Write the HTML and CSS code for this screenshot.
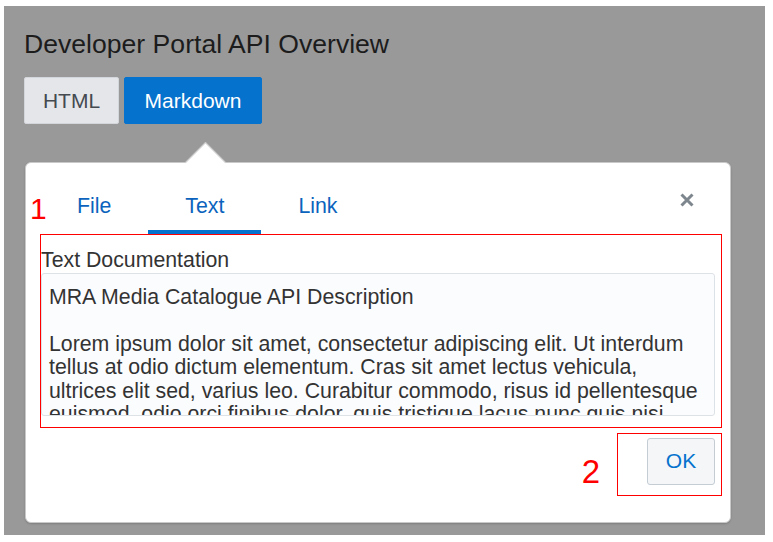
FILE: index.html
```html
<!DOCTYPE html>
<html lang="en">
<head>
<meta charset="utf-8">
<title>Developer Portal API Overview</title>
<link rel="stylesheet" href="styles.css">
</head>
<body>
<div class="screen">
  <h1 class="title">Developer Portal API Overview</h1>
  <div class="toggle">
    <button class="seg">HTML</button>
    <button class="seg seg-active">Markdown</button>
  </div>
  <div class="popover">
    <span class="marker marker-one">1</span>
    <div class="pop-head">
      <nav class="tabs">
        <a class="tab">File</a>
        <a class="tab tab-active">Text</a>
        <a class="tab">Link</a>
      </nav>
      <button class="close" aria-label="Close">
        <svg width="14" height="14" viewBox="0 0 14 14"><path d="M1.5 1.5 L12.5 12.5 M12.5 1.5 L1.5 12.5" stroke="#7d858d" stroke-width="3" stroke-linecap="butt" fill="none"/></svg>
      </button>
    </div>
    <div class="field outline">
      <label class="field-label">Text Documentation</label>
      <div class="textarea">
        <p>MRA Media Catalogue API Description</p>
        <p>Lorem ipsum dolor sit amet, consectetur adipiscing elit. Ut interdum tellus at odio dictum elementum. Cras sit amet lectus vehicula, ultrices elit sed, varius leo. Curabitur commodo, risus id pellentesque euismod, odio orci finibus dolor, quis tristique lacus nunc quis nisi.</p>
      </div>
    </div>
    <div class="actions">
      <span class="marker marker-two">2</span>
      <div class="outline ok-wrap">
        <button class="ok">OK</button>
      </div>
    </div>
  </div>
</div>
</body>
</html>
```

FILE: styles.css
```css
* { box-sizing: border-box; }
html, body { margin: 0; padding: 0; background: #fff; }
body { font-family: "Liberation Sans", Arial, sans-serif; }

.screen {
  margin: 6px 8px 7px 4px;
  width: 761px;
  height: 529px;
  background: #999999;
  padding: 23px 0 0 20px;
  overflow: hidden;
}

.title {
  margin: 0;
  font-size: 26.6px;
  line-height: 30px;
  font-weight: normal;
  color: #1c1c1c;
}

.toggle {
  display: flex;
  gap: 5px;
  margin-top: 18px;
}
.seg {
  height: 47px;
  padding: 0;
  font-family: inherit;
  font-size: 21px;
  line-height: 24px;
  border: 1px solid #d3d6da;
  border-radius: 2px;
  background: #e4e6e9;
  color: #444a50;
}
.seg:first-child { width: 95px; }
.seg-active {
  background: #0572ce;
  border-color: #0572ce;
  color: #fff;
  width: 138px;
}

.popover {
  position: relative;
  margin-top: 38px;
  margin-left: 1px;
  width: 706px;
  height: 361px;
  background: #fff;
  border: 1px solid #c9c9c9;
  border-radius: 6px;
  box-shadow: 0 1px 2px rgba(0,0,0,0.18);
  padding: 0 8px 0 14px;
}
.popover::before {
  content: "";
  position: absolute;
  width: 28px;
  height: 28px;
  left: 165px;
  top: -15px;
  background: #fff;
  border-top: 1px solid #c9c9c9;
  border-left: 1px solid #c9c9c9;
  transform: rotate(45deg);
}

.marker {
  color: #ff0000;
  font-family: "Liberation Sans", Arial, sans-serif;
}
.marker-one {
  position: absolute;
  left: 4px;
  top: 31px;
  font-size: 30px;
  line-height: 30px;
}

.pop-head {
  position: relative;
  display: flex;
  align-items: flex-start;
}
.tabs {
  display: flex;
  padding-top: 31px;
}
.tab {
  padding: 0 37px 12px;
  font-size: 21.3px;
  line-height: 24px;
  color: #0b63bd;
  border-bottom: 4px solid transparent;
}
.tab-active { border-bottom-color: #0572ce; }

.close {
  margin: 30px 28px 0 auto;
  padding: 0;
  border: 0;
  background: none;
  width: 14px;
  height: 14px;
  display: block;
}
.close svg { display: block; }

.outline { border: 1px solid #ff0000; }

.field {
  padding: 14px 6px 11px 0;
}
.field-label {
  display: block;
  font-size: 21.3px;
  line-height: 23.5px;
  color: #333;
}
.textarea {
  height: 143px;
  overflow: hidden;
  background: #fbfcfe;
  border: 1px solid #dde2e7;
  border-radius: 3px;
  padding: 12px 11px 0 7px;
  font-size: 21.3px;
  line-height: 23.5px;
  color: #333;
}
.textarea p { margin: 0 0 23.5px; }

.actions {
  display: flex;
  justify-content: flex-end;
  align-items: flex-end;
  margin-top: 5px;
}
.marker-two {
  font-size: 33px;
  line-height: 33px;
  margin: 0 17px 8px 0;
}
.ok-wrap {
  padding: 4px 6px 10px 29px;
}
.ok {
  display: block;
  width: 68px;
  height: 47px;
  padding: 0;
  font-family: inherit;
  font-size: 21px;
  color: #0572ce;
  background: #f4f6f8;
  border: 1px solid #c4ccd4;
  border-radius: 3px;
}
```
